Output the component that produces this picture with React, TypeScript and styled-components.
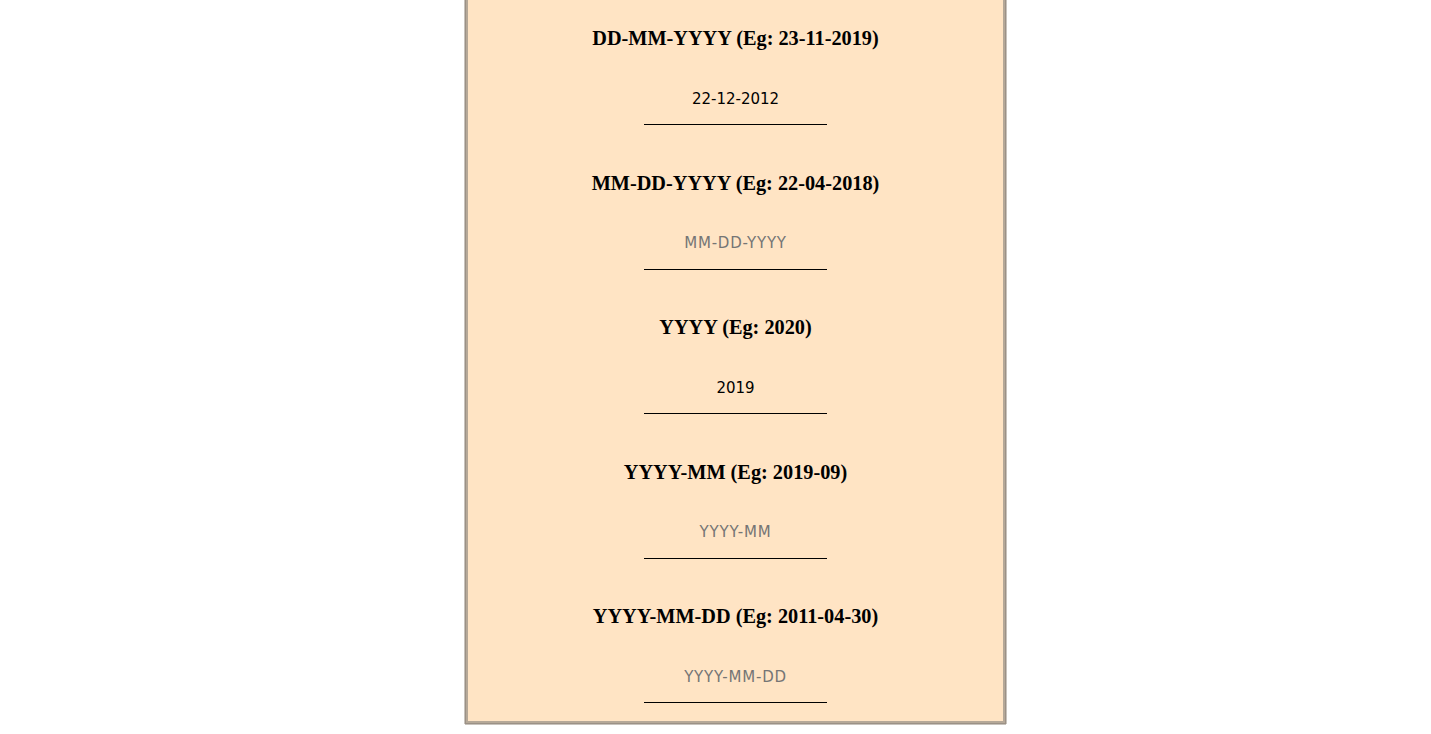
import styled, { createGlobalStyle } from "styled-components"

const GlobalStyle = createGlobalStyle`
    html, body {
        margin: 0;
        padding: 0;
        background: #ffffff;
    }
    body {
        font-family: "Liberation Serif", "Times New Roman", serif;
    }
`

const Page = styled.div`
    display: flex;
    padding-bottom: 10px;
`

const Panel = styled.div`
    width: 541px;
    box-sizing: border-box;
    margin-left: 465px;
    padding: 27px 0 20px;
    background: #ffe4c4;
    border: 1px solid #9b9186;
    border-top: none;
    box-shadow:
        inset 2px 0 0 #b5a898, inset -2px 0 0 #b5a898, inset 0 -2px 0 #b5a898,
        1px 0 0 #c9c3bc, -1px 0 0 #c9c3bc, 0 1px 0 #c9c3bc;
    display: flex;
    flex-direction: column;
    align-items: center;
    gap: 46.5px;
`

const Field = styled.div`
    display: flex;
    flex-direction: column;
    align-items: center;
    gap: 35px;
`

const Label = styled.h3`
    margin: 0;
    font-family: "Liberation Serif", "Times New Roman", serif;
    font-weight: bold;
    font-size: 20.3px;
    line-height: 22px;
    color: #000;
`

const DateInput = styled.input`
    width: 183px;
    height: 41px;
    box-sizing: border-box;
    padding: 0 0 11px;
    border: none;
    border-bottom: 1px solid #000;
    background: transparent;
    outline: none;
    text-align: center;
    font-family: "DejaVu Sans", Tahoma, sans-serif;
    font-size: 15px;
    color: #000;

    &::placeholder {
        color: #757575;
        letter-spacing: 0.8px;
    }
`

const fields = [
    { label: "DD-MM-YYYY (Eg: 23-11-2019)", placeholder: "DD-MM-YYYY", value: "22-12-2012" },
    { label: "MM-DD-YYYY (Eg: 22-04-2018)", placeholder: "MM-DD-YYYY", value: "" },
    { label: "YYYY (Eg: 2020)", placeholder: "YYYY", value: "2019" },
    { label: "YYYY-MM (Eg: 2019-09)", placeholder: "YYYY-MM", value: "" },
    { label: "YYYY-MM-DD (Eg: 2011-04-30)", placeholder: "YYYY-MM-DD", value: "" },
]

export default () => {
    return (
        <Page>
            <GlobalStyle />
            <Panel>
                {
                    fields.map(f =>
                        <Field key={f.label}>
                            <Label>{f.label}</Label>
                            <DateInput type="text" placeholder={f.placeholder} defaultValue={f.value} />
                        </Field>
                    )
                }
            </Panel>
        </Page>
    )
}
